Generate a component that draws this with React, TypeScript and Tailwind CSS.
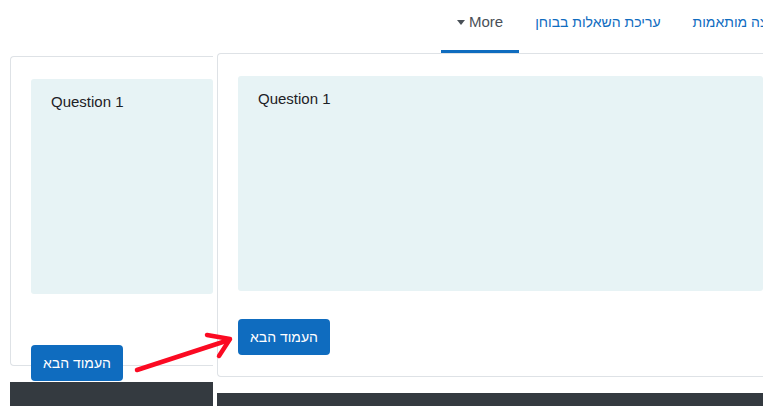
function QuestionCard() {
  return (
    <div className="h-[215px] rounded-[3px] bg-[#e7f3f5] px-5 pt-3 text-[15px] leading-[22.5px] text-[#1d2125]">
      Question 1
    </div>
  );
}

function NextButton() {
  return (
    <button className="h-[36px] w-[92px] rounded-[4px] bg-[#0f6cbf] text-[14px] text-white" dir="rtl">
      העמוד הבא
    </button>
  );
}

export default function App() {
  return (
    <main className="relative flex h-[406px] w-[763px] overflow-hidden bg-white font-['Liberation_Sans',Arial,sans-serif]">
      {/* older screenshot, cut at the right */}
      <div className="flex w-[213px] shrink-0 flex-col pt-[56px]">
        <div className="ml-[10px] h-[310px] rounded-l-[4px] border-y border-l border-[#dee2e6] pl-5 pt-[22px]">
          <QuestionCard />
        </div>
        <div className="-mt-[21px] ml-[31px]">
          <NextButton />
        </div>
        <div className="ml-[10px] mt-[1px] flex-1 bg-[#343a40]" />
      </div>

      {/* newer screenshot */}
      <div className="ml-[4px] flex min-w-0 flex-1 flex-col">
        <nav className="flex h-[53px] shrink-0 overflow-hidden pl-[224px] leading-[22.5px]">
          <div className="flex h-[53px] shrink-0 items-start gap-1 border-b-[3px] border-[#0f6cbf] px-4 pt-[11px] text-[15px] text-[#495057]">
            <span className="mt-[9px] h-0 w-0 border-x-[4px] border-t-[5px] border-x-transparent border-t-[#495057]" />
            <span>More</span>
          </div>
          <a className="shrink-0 whitespace-nowrap px-4 pt-[11px] text-[14px] text-[#0f6cbf]" dir="rtl">
            עריכת השאלות בבוחן
          </a>
          <a className="shrink-0 whitespace-nowrap px-4 pt-[11px] text-[14px] text-[#0f6cbf]" dir="rtl">
            הגדרות קבוצה מותאמות
          </a>
        </nav>
        <div className="h-[324px] shrink-0 rounded-l-[4px] border-y border-l border-[#dee2e6] pl-5 pt-[22px]">
          <QuestionCard />
          <div className="mt-[28px]">
            <NextButton />
          </div>
        </div>
        <div className="mt-[16px] flex-1 bg-[#343a40]" />
      </div>

      {/* annotation arrow */}
      <svg className="pointer-events-none absolute left-0 top-0" width="763" height="406">
        <g stroke="#fb0a22" strokeWidth="4.5" strokeLinecap="round" strokeLinejoin="round" fill="none">
          <path d="M137 370 L229 340" />
          <path d="M207 335 L230 339 L219 356" />
        </g>
      </svg>
    </main>
  );
}
